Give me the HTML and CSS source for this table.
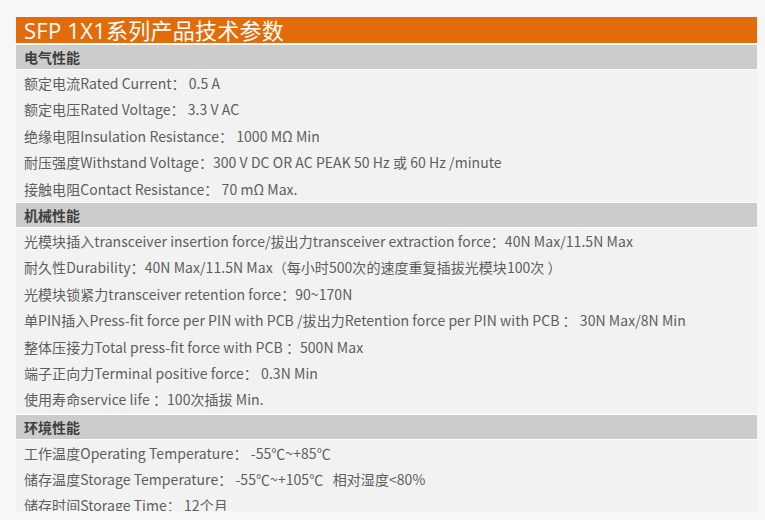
FILE: index.html
```html
<!DOCTYPE html>
<html lang="zh-CN">
<head>
<meta charset="utf-8">
<title>SFP 1X1系列产品技术参数</title>
<link rel="stylesheet" href="styles.css">
</head>
<body>
<div class="panel">
  <h1 class="title">SFP 1X1系列产品技术参数</h1>
  <h2 class="section-head">电气性能</h2>
  <div class="rows">
    <p>额定电流Rated Current： 0.5 A</p>
    <p>额定电压Rated Voltage： 3.3 V AC</p>
    <p>绝缘电阻Insulation Resistance： 1000 MΩ Min</p>
    <p>耐压强度Withstand Voltage：300 V DC OR AC PEAK 50 Hz 或 60 Hz /minute</p>
    <p>接触电阻Contact Resistance： 70 mΩ Max.</p>
  </div>
  <h2 class="section-head">机械性能</h2>
  <div class="rows rows-tall">
    <p>光模块插入transceiver insertion force/拔出力transceiver extraction force：40N Max/11.5N Max</p>
    <p>耐久性Durability：40N Max/11.5N Max（每小时500次的速度重复插拔光模块100次 ）</p>
    <p>光模块锁紧力transceiver retention force：90~170N</p>
    <p>单PIN插入Press-fit force per PIN with PCB /拔出力Retention force per PIN with PCB ： 30N Max/8N Min</p>
    <p>整体压接力Total press-fit force with PCB ：500N Max</p>
    <p>端子正向力Terminal positive force： 0.3N Min</p>
    <p>使用寿命service life ：100次插拔 Min.</p>
  </div>
  <h2 class="section-head">环境性能</h2>
  <div class="rows">
    <p>工作温度Operating Temperature： -55℃~+85℃</p>
    <p>储存温度Storage Temperature： -55℃~+105℃&nbsp;&nbsp; 相对湿度&lt;80%</p>
    <p>储存时间Storage Time： 12个月</p>
  </div>
</div>
</body>
</html>
```
FILE: styles.css
```css
html, body {
  margin: 0;
  padding: 0;
  background: #f7f7f7;
}
body {
  padding: 17px 8px 0 16px;
}
.panel {
  width: 741px;
  height: 494px;
  overflow: hidden;
  background: #ffffff;
  display: flex;
  flex-direction: column;
  gap: 1px;
}
.title {
  margin: 0 0 1px 0;
  height: 26px;
  flex: none;
  background: #e36c0a;
  color: #ffffff;
  font-family: "Open Sans", "Noto Sans CJK SC", sans-serif;
  font-weight: 400;
  font-size: 22px;
  line-height: 26px;
  letter-spacing: 0.25px;
  padding-left: 8px;
  white-space: nowrap;
}
.section-head {
  margin: 0;
  flex: none;
  height: 24px;
  background: #cccccc;
  color: #3f3f3f;
  font-family: "Noto Sans CJK SC", sans-serif;
  font-weight: 700;
  font-size: 14px;
  line-height: 24px;
  padding-left: 8px;
}
.rows {
  flex: none;
  background: #f2f2f2;
  padding: 0 0 0 8px;
}
.rows-tall {
  padding-bottom: 1px;
}
.rows p {
  margin: 0;
  height: 26.4px;
  font-family: "Noto Sans CJK SC", sans-serif;
  font-size: 14px;
  line-height: 26.4px;
  letter-spacing: 0.05px;
  color: #5e5e5e;
  white-space: nowrap;
}
```
